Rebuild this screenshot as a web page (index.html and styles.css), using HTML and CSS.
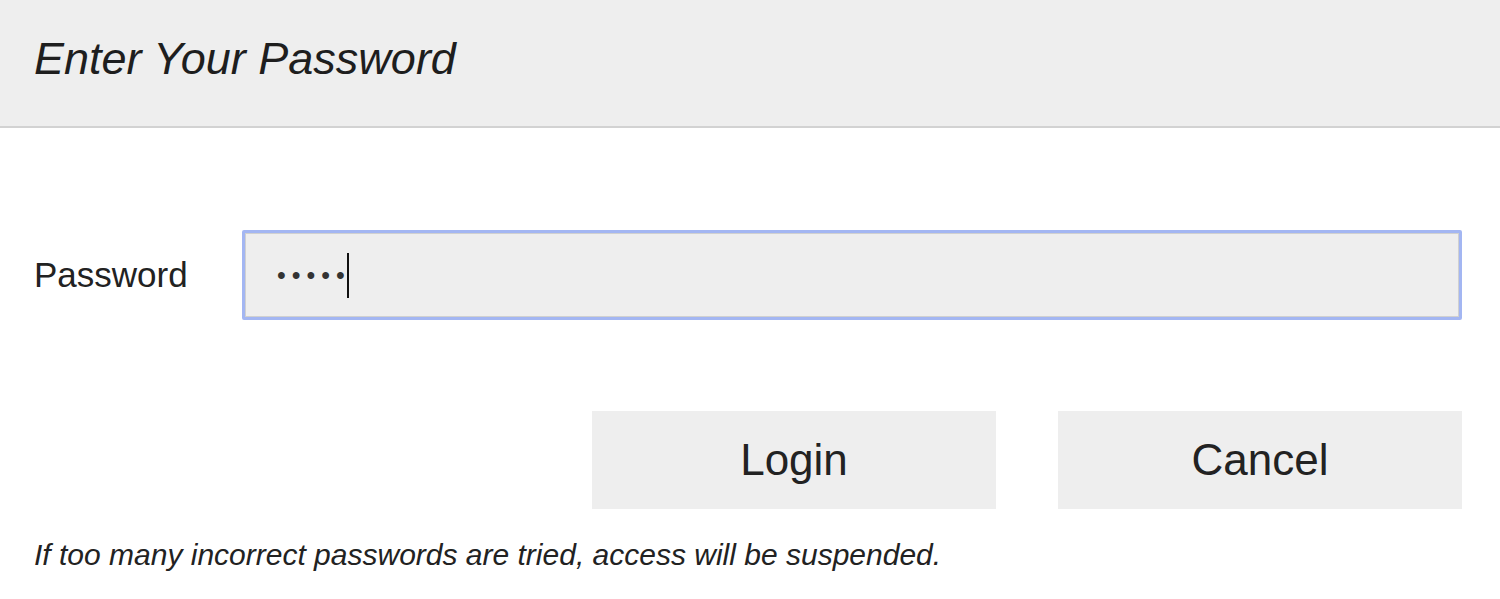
FILE: index.html
```html
<!DOCTYPE html>
<html lang="en">
<head>
<meta charset="utf-8">
<title>Enter Your Password</title>
<link rel="stylesheet" href="styles.css">
</head>
<body>
<header class="dialog-header">
  <h1 class="dialog-title">Enter Your Password</h1>
</header>
<main class="dialog-body">
  <div class="field-row">
    <label class="field-label">Password</label>
    <div class="field-input"><span class="dots">•••••</span><span class="caret"></span></div>
  </div>
  <div class="button-row">
    <button class="btn">Login</button>
    <button class="btn">Cancel</button>
  </div>
  <p class="note">If too many incorrect passwords are tried, access will be suspended.</p>
</main>
</body>
</html>
```
FILE: styles.css
```css
html, body {
  margin: 0;
  padding: 0;
  background: #ffffff;
  font-family: "Liberation Sans", Arial, sans-serif;
  color: #222222;
}

.dialog-header {
  background: #eeeeee;
  border-bottom: 2px solid #d2d2d2;
  height: 126px;
  box-sizing: content-box;
  padding: 0 34px;
}

.dialog-title {
  margin: 0;
  padding-top: 34px;
  font-size: 45px;
  line-height: 50px;
  font-weight: normal;
  font-style: italic;
  color: #1e1e1e;
}

.dialog-body {
  padding: 0 38px 0 34px;
}

.field-row {
  display: grid;
  grid-template-columns: 208px 1fr;
  align-items: center;
  margin-top: 102px;
}

.field-label {
  font-size: 35px;
  line-height: 40px;
  color: #222222;
}

.field-input {
  box-sizing: border-box;
  height: 90px;
  border: 3px solid #a3b6f2;
  border-radius: 2px;
  box-shadow: inset 0 0 0 1px #d0d0d0;
  background: #eeeeee;
  padding-left: 32px;
  display: flex;
  align-items: center;
}

.dots {
  font-size: 25px;
  letter-spacing: 6px;
  color: #333333;
  line-height: 1;
}

.caret {
  display: inline-block;
  width: 2px;
  height: 45px;
  background: #111111;
  margin-left: -4px;
}

.button-row {
  display: flex;
  justify-content: flex-end;
  gap: 62px;
  margin-top: 91px;
}

.btn {
  width: 404px;
  height: 98px;
  border: none;
  background: #eeeeee;
  font-family: "Liberation Sans", Arial, sans-serif;
  font-size: 44px;
  color: #222222;
  padding: 0;
}

.note {
  margin: 29px 0 0 0;
  font-size: 30px;
  line-height: 34px;
  font-style: italic;
  color: #222222;
}
```
